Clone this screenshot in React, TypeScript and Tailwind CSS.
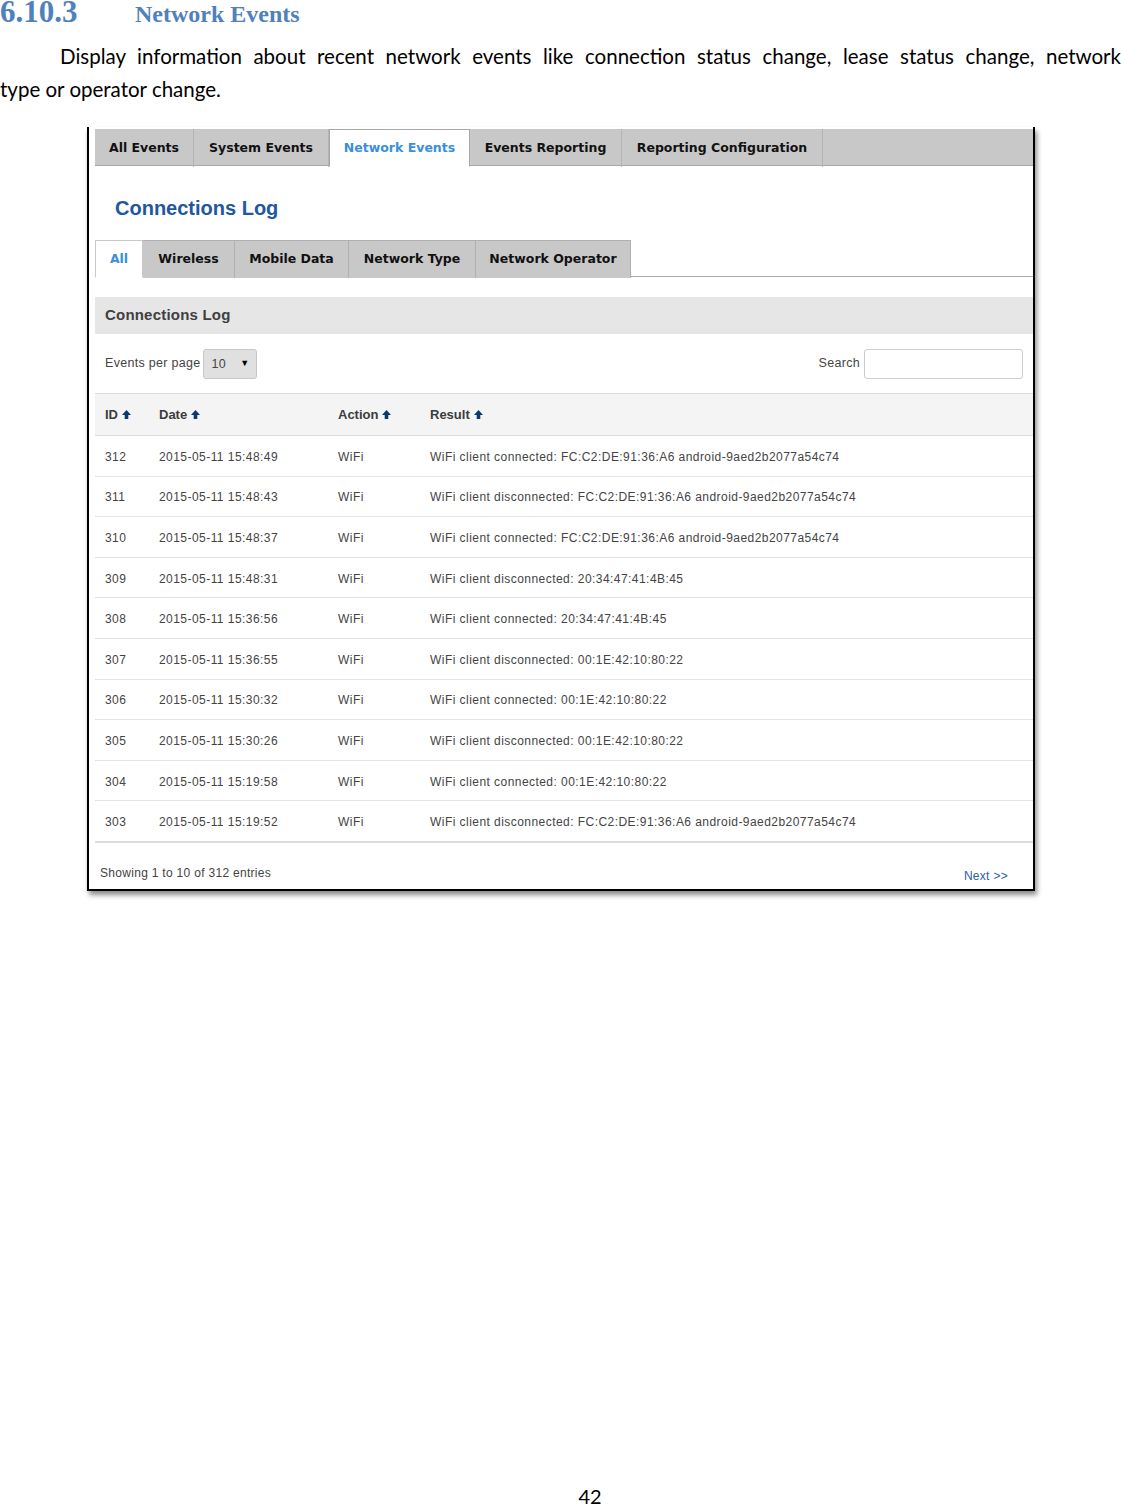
import React from "react";

const topTabs = [
  { label: "All Events", w: "w-[99px]" },
  { label: "System Events", w: "w-[135px]" },
  { label: "Network Events", w: "w-[141px]", active: true },
  { label: "Events Reporting", w: "w-[152px]" },
  { label: "Reporting Configuration", w: "w-[201px]" },
];

const subTabs = [
  { label: "All", w: "w-[48px]", active: true },
  { label: "Wireless", w: "w-[92px]" },
  { label: "Mobile Data", w: "w-[114px]" },
  { label: "Network Type", w: "w-[127px]" },
  { label: "Network Operator", w: "w-[155px]" },
];

const rows = [
  ["312", "2015-05-11 15:48:49", "WiFi client connected: FC:C2:DE:91:36:A6 android-9aed2b2077a54c74"],
  ["311", "2015-05-11 15:48:43", "WiFi client disconnected: FC:C2:DE:91:36:A6 android-9aed2b2077a54c74"],
  ["310", "2015-05-11 15:48:37", "WiFi client connected: FC:C2:DE:91:36:A6 android-9aed2b2077a54c74"],
  ["309", "2015-05-11 15:48:31", "WiFi client disconnected: 20:34:47:41:4B:45"],
  ["308", "2015-05-11 15:36:56", "WiFi client connected: 20:34:47:41:4B:45"],
  ["307", "2015-05-11 15:36:55", "WiFi client disconnected: 00:1E:42:10:80:22"],
  ["306", "2015-05-11 15:30:32", "WiFi client connected: 00:1E:42:10:80:22"],
  ["305", "2015-05-11 15:30:26", "WiFi client disconnected: 00:1E:42:10:80:22"],
  ["304", "2015-05-11 15:19:58", "WiFi client connected: 00:1E:42:10:80:22"],
  ["303", "2015-05-11 15:19:52", "WiFi client disconnected: FC:C2:DE:91:36:A6 android-9aed2b2077a54c74"],
];

const SortArrow = () => (
  <svg width="9" height="9" viewBox="0 0 9 9" className="inline-block ml-[4px] -mt-[2px]">
    <path d="M4.5 0 L9 5 L6.3 5 L6.3 9 L2.7 9 L2.7 5 L0 5 Z" fill="#0b3a6e" />
  </svg>
);

const App: React.FC = () => {
  return (
    <div className="relative w-[1121px] h-[1505px] bg-white flex flex-col">
      {/* Document heading (clipped at the page top, as in the source) */}
      <div className="flex items-baseline h-[24px] font-['Liberation_Serif',serif] font-bold text-[#4f81bd]">
        <span className="text-[31px] leading-[24px] w-[135px]">6.10.3</span>
        <span className="text-[24px] leading-[24px]">Network Events</span>
      </div>
      <div className="mt-[16px] text-[20.5px] leading-[33px] text-black font-['Lato',sans-serif]">
        <p className="text-justify [text-align-last:justify] indent-[60px]">
          Display information about recent network events like connection status change, lease status change, network
        </p>
        <p>type or operator change.</p>
      </div>

      {/* Screenshot frame */}
      <div className="ml-[87px] mt-[21px] w-[948px] border-x-2 border-b-2 border-black pl-[6px] pt-[2px] shadow-[2px_4px_5px_rgba(0,0,0,0.45)] font-['Liberation_Sans',sans-serif]">
        {/* Top tabs */}
        <div className="flex h-[37px] bg-[#c8c8c8] border-b border-[#a8a8a8]">
          {topTabs.map((t) => (
            <div
              key={t.label}
              className={`${t.w} -mb-px h-[38px] flex items-center justify-center font-['DejaVu_Sans',sans-serif] font-bold text-[12.5px] ${
                t.active
                  ? "bg-white text-[#3a8fdb] border-x border-t border-[#a8a8a8] border-b border-b-white"
                  : "text-[#111] border-r border-[#b4b4b4]"
              }`}
            >
              {t.label}
            </div>
          ))}
        </div>

        <div className="h-[74px] pt-[10px] pl-[20px] flex items-center text-[20px] font-bold text-[#2257a0]">
          Connections Log
        </div>

        {/* Sub tabs */}
        <div className="flex h-[37px] border-b border-[#a8a8a8]">
          {subTabs.map((t) => (
            <div
              key={t.label}
              className={`${t.w} -mb-px h-[38px] flex items-center justify-center font-['DejaVu_Sans',sans-serif] font-bold text-[12.5px] ${
                t.active
                  ? "bg-white text-[#3a8fdb] border-x border-t border-[#c8c8c8] border-b border-b-white"
                  : "bg-[#c8c8c8] text-[#111] border-r border-t border-[#b0b0b0]"
              }`}
            >
              {t.label}
            </div>
          ))}
        </div>

        {/* Section header */}
        <div className="mt-[20px] h-[37px] bg-[#e6e6e6] pl-[10px] flex items-center text-[15px] font-bold text-[#404040] tracking-[0.2px]">
          Connections Log
        </div>

        {/* Controls */}
        <div className="h-[59px] flex items-center justify-between pl-[10px] pr-[10px] text-[12.5px] text-[#444] tracking-[0.3px]">
          <div className="flex items-center">
            <span>Events per page</span>
            <div className="ml-[2px] w-[54px] h-[30px] bg-[#e0e0e0] border border-[#c8c8c8] rounded-[3px] flex items-center justify-between pl-[8px] pr-[6px]">
              <span className="mt-[2px]">10</span>
              <span className="text-[9px] text-black">▼</span>
            </div>
          </div>
          <div className="flex items-center">
            <span>Search</span>
            <div className="ml-[4px] w-[159px] h-[30px] border border-[#cccccc] rounded-[3px] bg-white" />
          </div>
        </div>

        {/* Table */}
        <div className="grid grid-cols-[54px_179px_92px_1fr] pl-[10px] h-[43px] items-center bg-[#f4f4f4] border-t border-b border-[#dcdcdc] text-[13px] font-bold text-[#3c3c3c]">
          <div>ID<SortArrow /></div>
          <div>Date<SortArrow /></div>
          <div>Action<SortArrow /></div>
          <div>Result<SortArrow /></div>
        </div>
        {rows.map((r, i) => (
          <div
            key={r[0]}
            className={`grid grid-cols-[54px_179px_92px_1fr] pl-[10px] pt-[2px] items-center text-[12px] tracking-[0.45px] text-[#444] ${
              i === rows.length - 1 ? "h-[42px] border-b-2 border-[#dcdcdc]" : "h-[40.6px] border-b border-[#e2e2e2]"
            }`}
          >
            <div>{r[0]}</div>
            <div>{r[1]}</div>
            <div>WiFi</div>
            <div>{r[2]}</div>
          </div>
        ))}

        {/* Footer */}
        <div className="h-[46px] flex items-end justify-between pl-[5px] pr-[25px] pb-[4px] text-[12px] tracking-[0.3px]">
          <span className="text-[#444] mb-[3px]">Showing 1 to 10 of 312 entries</span>
          <span className="text-[#2a5ea8]">Next &gt;&gt;</span>
        </div>
      </div>

      <div className="mt-auto mb-[-5px] h-[24px] pl-[59px] text-center text-[20px] leading-none font-['Lato',sans-serif] text-black">
        42
      </div>
    </div>
  );
};

export default App;
